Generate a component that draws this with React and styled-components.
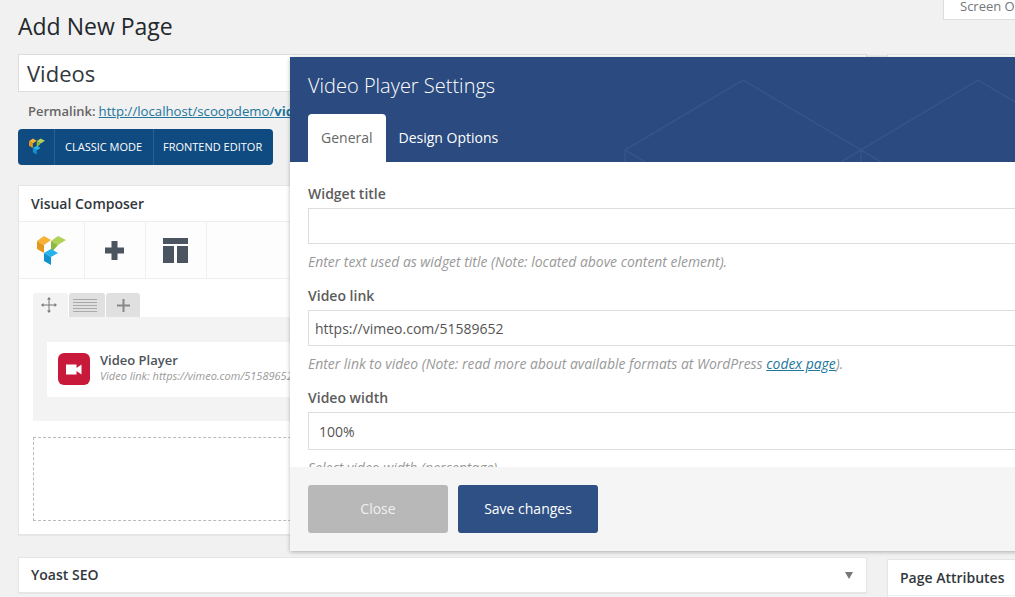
import React from "react";
import styled, { createGlobalStyle } from "styled-components";

const Global = createGlobalStyle`
  html, body { margin: 0; padding: 0; height: 597px; overflow: hidden; background: #f1f1f1; }
  * { box-sizing: border-box; }
  body { font-family: "Open Sans", "Liberation Sans", sans-serif; color: #444; }
`;

const Viewport = styled.div`
  position: relative; width: 1015px; height: 597px; overflow: hidden; background: #f1f1f1;
`;
const Columns = styled.div`
  display: grid; grid-template-columns: 849px 300px; column-gap: 20px; padding-left: 18px; width: 1200px;
`;
const Main = styled.main`display: flex; flex-direction: column;`;
const Heading = styled.h1`
  margin: 0 0 12px; padding-top: 10px; font-size: 23px; line-height: 32px; font-weight: 400; color: #23282d;
`;
const TitleInput = styled.input`
  display: block; width: 100%; height: 38px; padding: 0 8px; border: 1px solid #ddd; background: #fff;
  font: 400 22px "Open Sans", sans-serif; color: #32373c; outline: none;
`;
const Permalink = styled.div`
  margin-top: 10px; padding-left: 10px; height: 18px; font-size: 13px; line-height: 18px; font-weight: 600; color: #666;
  white-space: nowrap;
`;
const PermaLinkAnchor = styled.a`
  margin-left: 3px; font-weight: 400; font-size: 13.2px; color: #21759b; text-decoration: underline;
  b { font-weight: 700; }
`;
const ModeBar = styled.div`
  display: flex; align-self: flex-start; margin-top: 9px; height: 36px; background: #0f4a80; border-radius: 4px; color: #fff;
`;
const ModeLogo = styled.div`
  width: 37px; display: flex; align-items: center; justify-content: center; padding-left: 2px;
  border-right: 1px solid #2a5f90;
`;
const ModeButton = styled.div`
  display: flex; align-items: center; width: ${p => p.$w}px; padding: 0 0 2px 10px; font-size: 11px; font-weight: 500; white-space: nowrap;
  & + & { border-left: 1px solid #2a5f90; padding-left: 9px; }
`;
const Box = styled.section`
  background: #fff; border: 1px solid #e5e5e5; box-shadow: 0 1px 1px rgba(0,0,0,.04);
`;
const ComposerBox = styled(Box)`margin-top: 20px; height: 350px;`;
const BoxTitle = styled.div`
  height: ${p => p.$h || 36}px; padding: 0 12px; display: flex; align-items: center; justify-content: space-between;
  font-size: 14px; font-weight: 600; color: #32373c; border-bottom: 1px solid ${p => p.$noBorder ? "transparent" : "#eee"};
`;
const Toolbar = styled.div`
  display: flex; height: 57px; background: #fdfdfd; border-bottom: 1px solid #f0f0f0;
`;
const ToolCell = styled.div`
  width: ${p => p.$w}px; display: flex; align-items: center; justify-content: center; border-right: 1px solid #f0f0f0;
  padding-right: ${p => p.$shift || 0}px;
`;
const Content = styled.div`padding: 14px 14px 0;`;
const RowTabs = styled.div`display: flex; gap: 1px; height: 24px;`;
const RowTab = styled.div`
  width: ${p => p.$w}px; display: flex; align-items: center; justify-content: center; padding-right: ${p => p.$shift || 0}px;
  border-radius: 3px 3px 0 0; background: ${p => p.$active ? "#f3f3f3" : "#e0e0e0"};
`;
const RowBody = styled.div`
  height: 104px; padding: 25px 14px 0; background: #f3f3f3;
`;
const Element = styled.div`
  display: flex; height: 55px; padding: 11px; gap: 10px; background: #fff; width: 792px;
`;
const ElementIcon = styled.div`
  width: 32px; height: 32px; border-radius: 6px; background: #c8193a; display: flex; align-items: center; justify-content: center;
`;
const ElementText = styled.div`display: flex; flex-direction: column;`;
const ElementName = styled.div`font-size: 13px; line-height: 16px; font-weight: 600; color: #4b5259; margin-top: -1px;`;
const ElementSub = styled.div`font-size: 11px; line-height: 16px; font-style: italic; color: #999; white-space: nowrap;`;
const DropZone = styled.div`
  margin-top: 16px; height: 84px; border: 1px dashed #bbb;
`;
const YoastBox = styled(Box)`margin-top: 22px; height: 36px;`;
const Arrow = styled.span`
  width: 0; height: 0; border-left: 4px solid transparent; border-right: 4px solid transparent; border-top: 7px solid #777;
  margin: 1px 1px 0 0;
`;
const Side = styled.aside`display: flex; flex-direction: column; padding-top: 54px; padding-left: 0;`;
const SideBox = styled(Box)`height: 485px;`;
const AttributesBox = styled(Box)`margin-top: 20px; height: 60px;`;
const ScreenTab = styled.div`
  position: absolute; top: 0; left: 943px; width: 110px; height: 20px; padding-left: 16px; background: #fff;
  border: 1px solid #ddd; border-top: 0; font-size: 13px; line-height: 13px; color: #72777c; white-space: nowrap;
`;
const Modal = styled.div`
  position: absolute; left: 290px; top: 57px; width: 800px; height: 494px; display: flex; flex-direction: column;
  background: #fff; box-shadow: 0 1px 4px rgba(0,0,0,.28);
`;
const ModalHead = styled.header`
  position: relative; height: 105px; flex: none; background: #2b4b80; overflow: hidden;
`;
const HeadPattern = styled.svg`position: absolute; left: 0; top: 0;`;
const ModalTitle = styled.h2`
  position: relative; margin: 0; padding: 15px 18px 0; font-size: 20px; line-height: 27px; font-weight: 300; color: #fff;
`;
const Tabs = styled.div`
  position: relative; display: flex; margin: 15px 0 0 18px; height: 48px;
`;
const Tab = styled.div`
  display: flex; align-items: center; padding: 0 13px 2px; font-size: 14px; font-weight: ${p => p.$active ? 400 : 500};
  color: ${p => p.$active ? "#666" : "#fff"}; background: ${p => p.$active ? "#fff" : "transparent"}; border-radius: 4px 4px 0 0;
`;
const ModalBody = styled.div`
  flex: 1; min-height: 0; overflow: hidden; padding: 22px 18px 0; background: #fff;
`;
const Label = styled.div`font-size: 14px; line-height: 20px; font-weight: 600; color: #5c5c5c; margin-bottom: 4px;`;
const FieldInput = styled.input`
  display: block; width: 100%; height: ${p => p.$h || 36}px; padding: 0 6px; border: 1px solid #ddd; background: #fff; outline: none;
  font: 400 14px "Open Sans", sans-serif; color: #555;
  ${p => p.$indent ? "padding-left: 10px;" : ""}
`;
const Help = styled.div`
  margin: 9px 0 15px; font-size: 13.93px; line-height: 18px; font-style: italic; color: #999; white-space: nowrap;
  a { color: #21759b; text-decoration: underline; }
`;
const ModalFoot = styled.footer`
  flex: none; height: 84px; padding: 18px; display: flex; gap: 10px; background: #f5f5f5;
`;
const FootButton = styled.div`
  width: 140px; height: 48px; padding-bottom: 2px; display: flex; align-items: center; justify-content: center; border-radius: 3px;
  font-size: 14px; background: ${p => p.$primary ? "#2e5085" : "#b8b8b8"}; color: ${p => p.$primary ? "#fff" : "#f0f0f0"};
`;

const VcLogo = ({ size = 29 }) => (
  <svg width={size} height={size * 31 / 29} viewBox="0 0 29 31">
    <polygon points="7,1 14,5 7,10 0,6" fill="#f8b133" />
    <polygon points="0,6 7,10 7,18 0,14" fill="#e39a1c" />
    <polygon points="21,1 29,5 21,10 14,6" fill="#b1d25a" />
    <polygon points="14,6 21,10 21,10 14,18" fill="#8fb83e" />
    <polygon points="14,14 21,18 14,22 7,18" fill="#26b2ea" />
    <polygon points="7,18 14,22 14,30 7,26" fill="#1390cf" />
  </svg>
);

const HeaderPattern = () => (
  <HeadPattern width="800" height="105" fill="none" stroke="#35558a" strokeWidth="1.5">
    <path d="M335 93 L453 23 L571 93 L688 23 L806 93" />
    <path d="M335 93 L335 105 M571 93 L571 105 M335 93 L355 105 M571 93 L551 105 M571 93 L591 105" />
  </HeadPattern>
);

export default function App() {
  return (
    <Viewport>
      <Global />
      <Columns>
        <Main>
          <Heading>Add New Page</Heading>
          <TitleInput readOnly value="Videos" />
          <Permalink>
            Permalink:
            <PermaLinkAnchor>http://localhost/scoopdemo/<b>videos</b>/</PermaLinkAnchor>
          </Permalink>
          <ModeBar>
            <ModeLogo><VcLogo size={16} /></ModeLogo>
            <ModeButton $w={98}>CLASSIC MODE</ModeButton>
            <ModeButton $w={120}>FRONTEND EDITOR</ModeButton>
          </ModeBar>
          <ComposerBox>
            <BoxTitle>Visual Composer</BoxTitle>
            <Toolbar>
              <ToolCell $w={66}><VcLogo /></ToolCell>
              <ToolCell $w={61} $shift={2}>
                <svg width="19" height="19" viewBox="0 0 19 19"><path d="M6.5 0h6v6.5H19v6h-6.5V19h-6v-6.5H0v-6h6.5z" fill="#4a5560" /></svg>
              </ToolCell>
              <ToolCell $w={61} $shift={2}>
                <svg width="25" height="25" viewBox="0 0 25 25" fill="#4a5560"><rect width="25" height="6" /><rect y="8" width="11" height="17" /><rect x="14" y="8" width="11" height="17" /></svg>
              </ToolCell>
            </Toolbar>
            <Content>
              <RowTabs>
                <RowTab $w={35} $active $shift={3}>
                  <svg width="16" height="16" viewBox="0 0 16 16" fill="#777" stroke="#777"><path d="M8 2v12M2 8h12" strokeWidth="1" /><path d="M8 0l2 2.5H6zM8 16l-2-2.5h4zM0 8l2.5-2v4zM16 8l-2.5 2V6z" stroke="none" /></svg>
                </RowTab>
                <RowTab $w={36} $shift={4}>
                  <svg width="24" height="13" viewBox="0 0 24 13" stroke="#aaa"><path d="M0 .5h24M0 3.5h24M0 6.5h24M0 9.5h24M0 12.5h24" /></svg>
                </RowTab>
                <RowTab $w={34}>
                  <svg width="13" height="13" viewBox="0 0 13 13" stroke="#888" strokeWidth="2"><path d="M6.5 0v13M0 6.5h13" /></svg>
                </RowTab>
              </RowTabs>
              <RowBody>
                <Element>
                  <ElementIcon>
                    <svg width="16" height="11" viewBox="0 0 16 11" fill="#fff"><path d="M0 .5h10.5v10H0zM10.5 4L15.5 .5v10L10.5 7z" /></svg>
                  </ElementIcon>
                  <ElementText>
                    <ElementName>Video Player</ElementName>
                    <ElementSub>Video link: https://vimeo.com/51589652</ElementSub>
                  </ElementText>
                </Element>
              </RowBody>
              <DropZone />
            </Content>
          </ComposerBox>
          <YoastBox>
            <BoxTitle $noBorder $h={34}>Yoast SEO<Arrow /></BoxTitle>
          </YoastBox>
        </Main>
        <Side>
          <SideBox />
          <AttributesBox>
            <BoxTitle>Page Attributes</BoxTitle>
          </AttributesBox>
        </Side>
      </Columns>
      <ScreenTab>Screen Options</ScreenTab>
      <Modal>
        <ModalHead>
          <HeaderPattern />
          <ModalTitle>Video Player Settings</ModalTitle>
          <Tabs>
            <Tab $active>General</Tab>
            <Tab>Design Options</Tab>
          </Tabs>
        </ModalHead>
        <ModalBody>
          <Label>Widget title</Label>
          <FieldInput readOnly />
          <Help>Enter text used as widget title (Note: located above content element).</Help>
          <Label>Video link</Label>
          <FieldInput readOnly value="https://vimeo.com/51589652" />
          <Help>Enter link to video (Note: read more about available formats at WordPress <a>codex page</a>).</Help>
          <Label>Video width</Label>
          <FieldInput readOnly $h={38} $indent value="100%" />
          <Help>Select video width (percentage).</Help>
        </ModalBody>
        <ModalFoot>
          <FootButton>Close</FootButton>
          <FootButton $primary>Save changes</FootButton>
        </ModalFoot>
      </Modal>
    </Viewport>
  );
}
